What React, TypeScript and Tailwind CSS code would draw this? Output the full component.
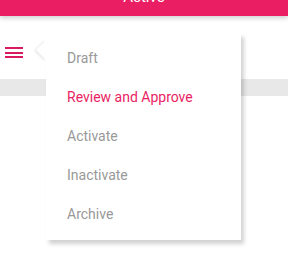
const items = [
  { label: "Draft", active: false },
  { label: "Review and Approve", active: true },
  { label: "Activate", active: false },
  { label: "Inactivate", active: false },
  { label: "Archive", active: false },
];

export default function App() {
  return (
    <div className="relative h-[266px] w-[288px] overflow-hidden bg-white font-['Roboto',sans-serif]">
      <div className="relative z-10 flex h-[16px] justify-center overflow-hidden bg-[#e91e63] shadow-[0_2px_5px_rgba(0,0,0,0.2)]">
        <span className="-mt-[13px] text-[15px] leading-[20px] text-white">Active</span>
      </div>

      <div className="flex h-[63px] items-start pl-[5px] pt-[31px]">
        <button className="flex w-[18px] flex-col gap-[2.5px]">
          <span className="block h-[2px] w-[18px] bg-[#d81b60]" />
          <span className="block h-[2px] w-[18px] bg-[#d81b60]" />
          <span className="block h-[2px] w-[18px] bg-[#d81b60]" />
        </button>
      </div>
      <div className="h-[17px] bg-[#e8e8e8]" />

      <div className="absolute left-[46px] top-[33px] w-[195px] bg-white py-[6px] shadow-[3px_4px_4px_rgba(0,0,0,0.18)]">
        <div className="absolute -left-[7px] top-[10px] h-[14px] w-[14px] rotate-45 bg-white shadow-[-1px_2px_2px_rgba(0,0,0,0.08)]" />
        <div className="absolute left-0 top-[6px] h-[22px] w-[9px] bg-white" />
        <ul className="relative">
          {items.map((item) => (
            <li
              key={item.label}
              className={`flex h-[39px] items-center pl-[21px] text-[14px] ${
                item.active ? "text-[#e91e63]" : "text-[#999999]"
              }`}
            >
              {item.label}
            </li>
          ))}
        </ul>
      </div>
    </div>
  );
}
